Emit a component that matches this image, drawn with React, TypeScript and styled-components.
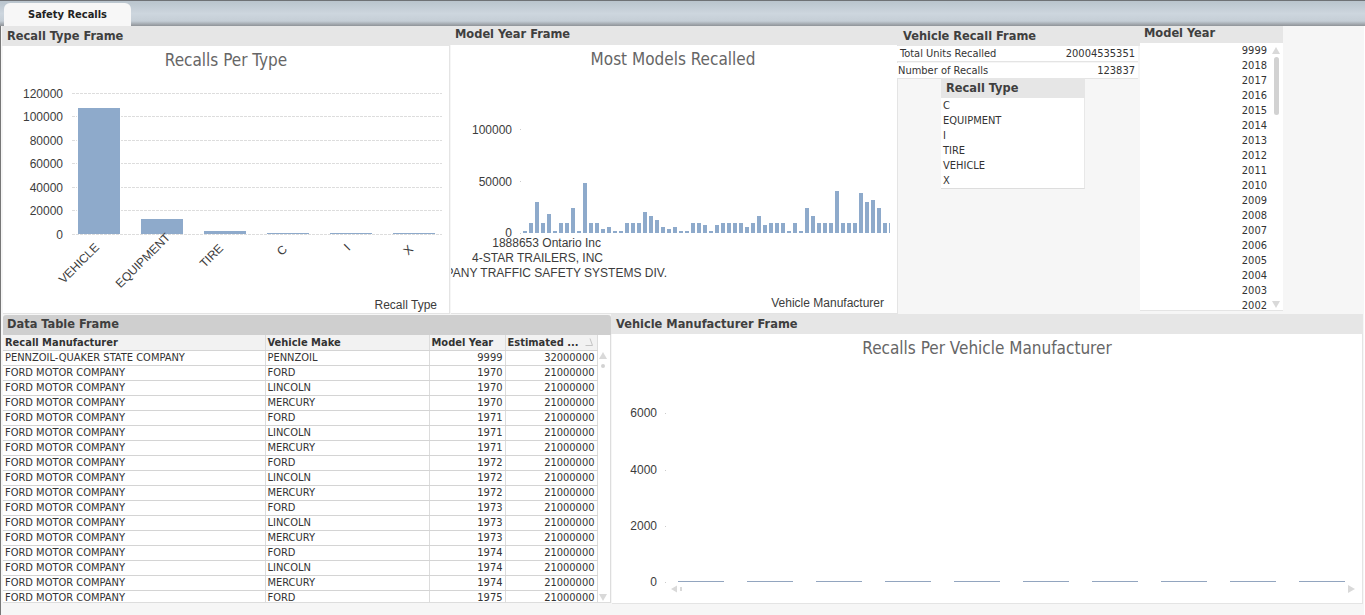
import React from 'react';
import styled, { createGlobalStyle } from 'styled-components';

const UI_FONT = '"DejaVu Sans Condensed", "DejaVu Sans", sans-serif';
const CHART_FONT = '"Liberation Sans", Arial, sans-serif';
const BAR = '#8eaacb';

const GlobalStyle = createGlobalStyle`
  html, body {
    margin: 0;
    padding: 0;
    background: #fff;
  }
`;

const Page = styled.div`
  width: 1365px;
  height: 615px;
  overflow: hidden;
  display: flex;
  flex-direction: column;
  font-family: ${UI_FONT};
  color: #333;
`;

const TabBar = styled.div`
  flex: none;
  box-sizing: border-box;
  height: 26px;
  padding: 2px 0 0 4px;
  display: flex;
  align-items: flex-end;
  background: linear-gradient(#b9c4cd, #cdd6de 50%, #c5ced6 80%, #8f9398);
  border-top: 1px solid #6f7276;
`;

const Tab = styled.div`
  width: 127px;
  height: 23px;
  box-sizing: border-box;
  padding-top: 5px;
  text-align: center;
  font-size: 11px;
  font-weight: 700;
  color: #222;
  background: #f7f7f7;
  border-radius: 6px 6px 0 0;
`;

const Sheet = styled.div`
  flex: 1;
  width: 1364px;
  box-sizing: border-box;
  display: flex;
  flex-direction: column;
  background: #f6f6f6;
  border-left: 1px solid #777;
`;

const TopRow = styled.div`
  display: flex;
  height: 288px;
  padding-left: 1px;
`;

const BottomRow = styled.div`
  display: flex;
  height: 290px;
  padding-left: 2px;
`;

const Panel = styled.section<{ $width: number; $top?: number }>`
  flex: none;
  box-sizing: border-box;
  width: ${(p) => p.$width}px;
  padding-top: ${(p) => p.$top ?? 0}px;
  display: flex;
  flex-direction: column;
  position: relative;
`;

const Caption = styled.div<{ $height?: number; $lineHeight?: number; $pad?: number; $dark?: boolean }>`
  flex: none;
  height: ${(p) => p.$height ?? 20}px;
  line-height: ${(p) => p.$lineHeight ?? p.$height ?? 20}px;
  padding-left: ${(p) => p.$pad ?? 5}px;
  background: ${(p) => (p.$dark ? '#cfcfcf' : '#e6e6e6')};
  border-radius: ${(p) => (p.$dark ? '3px 3px 0 0' : '0')};
  font-size: 12.7px;
  font-weight: 700;
  color: #3f3f3f;
  white-space: nowrap;
  overflow: hidden;
`;

const ChartBody = styled.div`
  flex: 1;
  background: #fff;
  border-bottom: 1px solid #e4e4e4;
  border-right: 1px solid #e4e4e4;
  margin-left: 1px;
  overflow: hidden;
  svg {
    display: block;
  }
`;

const ChartTitle = styled.text`
  font-family: ${UI_FONT};
  font-size: 17px;
  fill: #666;
  text-anchor: middle;
`;

const AxisText = styled.text`
  font-family: ${CHART_FONT};
  font-size: 12px;
  fill: #3c3c3c;
  text-anchor: end;
`;

const Stat = styled.div<{ $indent: number; $gap: number }>`
  display: flex;
  justify-content: space-between;
  box-sizing: border-box;
  width: 241px;
  height: 15px;
  line-height: 15px;
  margin: 0 0 ${(p) => p.$gap}px -1px;
  padding: 0 3px 0 ${(p) => p.$indent}px;
  background: #fff;
  box-shadow: 0 1px 0 #e4e4e4;
  font-size: 11px;
`;

const TypeBox = styled.div`
  width: 144px;
  margin-left: 43px;
`;

const TypeList = styled.div`
  background: #fff;
  border-bottom: 1px solid #ddd;
  border-right: 1px solid #e8e8e8;
`;

const ListRow = styled.div`
  height: 15px;
  line-height: 15px;
  padding-left: 2px;
  font-size: 11px;
`;

const YearList = styled.div`
  height: 267px;
  overflow: hidden;
  background: #fff;
  border-bottom: 1px solid #e4e4e4;
  position: relative;
`;

const YearRow = styled.div`
  height: 15px;
  line-height: 15px;
  padding-right: 16px;
  text-align: right;
  font-size: 11px;
`;

const ScrollArrow = styled.span<{ $dir: 'up' | 'down'; $x: number; $y: number }>`
  position: absolute;
  left: ${(p) => p.$x}px;
  top: ${(p) => p.$y}px;
  width: 0;
  height: 0;
  border-style: solid;
  border-color: transparent;
  ${(p) =>
    p.$dir === 'up'
      ? 'border-width: 0 4px 7px; border-bottom-color: #d9d9d9;'
      : 'border-width: 7px 4px 0; border-top-color: #d9d9d9;'}
`;

const ScrollThumb = styled.span<{ $x: number; $y: number; $w: number; $h: number }>`
  position: absolute;
  left: ${(p) => p.$x}px;
  top: ${(p) => p.$y}px;
  width: ${(p) => p.$w}px;
  height: ${(p) => p.$h}px;
  border-radius: 3px;
  background: #d2d2d2;
`;

const TableWrap = styled.div`
  flex: 1;
  position: relative;
  overflow: hidden;
  background: #fff;
  border-right: 1px solid #ddd;
  border-bottom: 1px solid #ddd;
  margin-bottom: 1px;
`;

const Table = styled.table`
  width: 594px;
  table-layout: fixed;
  border-collapse: collapse;
  font-size: 11px;
`;

const HeadCell = styled.th<{ $width: number }>`
  width: ${(p) => p.$width}px;
  height: 15px;
  padding: 0 2px;
  box-sizing: border-box;
  background: #f2f2f2;
  text-align: left;
  font-weight: 700;
  white-space: nowrap;
  overflow: hidden;
  border-right: 1px solid #dcdcdc;
  border-bottom: 1px solid #d4d4d4;
  position: relative;
`;

const Cell = styled.td<{ $num?: boolean }>`
  height: 15px;
  padding: 0 2px;
  box-sizing: border-box;
  text-align: ${(p) => (p.$num ? 'right' : 'left')};
  white-space: nowrap;
  overflow: hidden;
  border-right: 1px solid #dcdcdc;
  border-bottom: 1px solid #d4d4d4;
`;

const SortMark = styled.svg`
  position: absolute;
  right: 3px;
  top: 2px;
`;

const typeBars = [
  { label: 'VEHICLE', top: 108, end: [100, 248] },
  { label: 'EQUIPMENT', top: 219, end: [171, 238] },
  { label: 'TIRE', top: 231, end: [224, 249] },
  { label: 'C', top: 233, end: [288, 250] },
  { label: 'I', top: 233, end: [351, 249] },
  { label: 'X', top: 233, end: [414, 250] },
];

const typeTicks = [
  { label: '120000', y: 93.5 },
  { label: '100000', y: 116.5 },
  { label: '80000', y: 140.5 },
  { label: '60000', y: 163.5 },
  { label: '40000', y: 187.5 },
  { label: '20000', y: 210.5 },
  { label: '0', y: 234.5 },
];

const modelHeights = [
  2, 10, 31, 10, 19, 2, 10, 10, 25, 2, 50, 10, 10, 4, 6, 2, 2, 10, 10, 10, 21, 17, 13, 6, 4, 6, 2, 2, 10, 10,
  8, 2, 8, 10, 10, 10, 10, 6, 10, 17, 8, 10, 10, 10, 2, 10, 2, 25, 17, 10, 10, 10, 42, 10, 10, 10, 40, 31, 33, 25, 10, 10,
];

const makerTicks = [
  { label: '6000', y: 413 },
  { label: '4000', y: 470 },
  { label: '2000', y: 526 },
  { label: '0', y: 582 },
];

const makerBars = [678, 747, 816, 885, 954, 1023, 1092, 1161, 1230, 1299];

const recallTypes = ['C', 'EQUIPMENT', 'I', 'TIRE', 'VEHICLE', 'X'];

const years = [
  '9999', '2018', '2017', '2016', '2015', '2014', '2013', '2012', '2011',
  '2010', '2009', '2008', '2007', '2006', '2005', '2004', '2003', '2002',
];

const fordMakes = ['FORD', 'LINCOLN', 'MERCURY'];
const tableRows = [
  { maker: 'PENNZOIL-QUAKER STATE COMPANY', make: 'PENNZOIL', year: 9999, units: 32000000 },
  ...Array.from({ length: 16 }, (_, i) => ({
    maker: 'FORD MOTOR COMPANY',
    make: fordMakes[i % 3],
    year: 1970 + Math.floor(i / 3),
    units: 21000000,
  })),
];

function RecallTypeChart() {
  return (
    <svg width={446} height={267}>
      <g transform="translate(-3 -46)">
        <ChartTitle x={226} y={66}>Recalls Per Type</ChartTitle>
        {typeTicks.map((t) => (
          <g key={t.label}>
            <line x1={72} x2={442} y1={t.y} y2={t.y} stroke="#ddd" strokeDasharray="3 1" />
            <AxisText x={63} y={t.y + 4}>{t.label}</AxisText>
          </g>
        ))}
        {typeBars.map((b, i) => (
          <g key={b.label}>
            <rect x={77 + i * 63} y={b.top - 1} width={44} height={235 - b.top} fill="#fff" />
            <rect x={78 + i * 63} y={b.top} width={42} height={234 - b.top} fill={BAR} />
            <AxisText
              x={b.end[0]}
              y={b.end[1]}
              transform={`rotate(-45 ${b.end[0]} ${b.end[1]})`}
            >
              {b.label}
            </AxisText>
          </g>
        ))}
        <AxisText x={437} y={309}>Recall Type</AxisText>
      </g>
    </svg>
  );
}

function ModelChart() {
  return (
    <svg width={446} height={267}>
      <g transform="translate(-451 -45)">
        <ChartTitle x={673} y={65}>Most Models Recalled</ChartTitle>
        <AxisText x={512} y={134}>100000</AxisText>
        <AxisText x={512} y={186}>50000</AxisText>
        <AxisText x={512} y={237}>0</AxisText>
        <rect x={520} y={129} width={1} height={1} fill="#ccc" />
        <rect x={520} y={181} width={1} height={1} fill="#ccc" />
        <rect x={520} y={233} width={1} height={1} fill="#ccc" />
        {modelHeights.map((h, i) => (
          <rect
            key={i}
            x={523 + i * 6}
            y={233 - h}
            width={i === modelHeights.length - 1 ? 1 : 4}
            height={h}
            fill={BAR}
          />
        ))}
        <AxisText x={601} y={247}>1888653 Ontario Inc</AxisText>
        <AxisText x={603} y={262}>4-STAR TRAILERS, INC</AxisText>
        <AxisText x={667} y={277}>3M COMPANY TRAFFIC SAFETY SYSTEMS DIV.</AxisText>
        <AxisText x={884} y={307}>Vehicle Manufacturer</AxisText>
      </g>
    </svg>
  );
}

function MakerChart() {
  return (
    <svg width={751} height={270}>
      <g transform="translate(-612 -334)">
        <ChartTitle x={987} y={354}>Recalls Per Vehicle Manufacturer</ChartTitle>
        {makerTicks.map((t) => (
          <g key={t.label}>
            <AxisText x={657} y={t.y + 4}>{t.label}</AxisText>
            <rect x={665} y={t.y} width={1} height={1} fill="#ccc" />
          </g>
        ))}
        {makerBars.map((x) => (
          <rect key={x} x={x} y={581} width={46} height={1} fill="#92a5bf" />
        ))}
        <path d="M671 589l6-3.500v7zM680 587h2v4h-2z" fill="#d9d9d9" />
        <path d="M1348 585l7 4-7 4z" fill="#d9d9d9" />
      </g>
    </svg>
  );
}

export default function App() {
  return (
    <Page>
      <GlobalStyle />
      <TabBar>
        <Tab>Safety Recalls</Tab>
      </TabBar>
      <Sheet>
        <TopRow>
          <Panel $width={448}>
            <Caption>Recall Type Frame</Caption>
            <ChartBody>
              <RecallTypeChart />
            </ChartBody>
          </Panel>
          <Panel $width={448}>
            <Caption $height={19} $lineHeight={16}>Model Year Frame</Caption>
            <ChartBody>
              <ModelChart />
            </ChartBody>
          </Panel>
          <Panel $width={242}>
            <Caption>Vehicle Recall Frame</Caption>
            <Stat $indent={3} $gap={2}>
              <span>Total Units Recalled</span>
              <span>20004535351</span>
            </Stat>
            <Stat $indent={1} $gap={0}>
              <span>Number of Recalls</span>
              <span>123837</span>
            </Stat>
            <TypeBox>
              <Caption>Recall Type</Caption>
              <TypeList>
                {recallTypes.map((t) => (
                  <ListRow key={t}>{t}</ListRow>
                ))}
              </TypeList>
            </TypeBox>
          </Panel>
          <Panel $width={143}>
            <Caption $height={17} $lineHeight={13} $pad={4}>Model Year</Caption>
            <YearList>
              {years.map((y) => (
                <YearRow key={y}>{y}</YearRow>
              ))}
              <ScrollArrow $dir="up" $x={132} $y={4} />
              <ScrollThumb $x={134} $y={14} $w={5} $h={58} />
              <ScrollArrow $dir="down" $x={132} $y={258} />
            </YearList>
          </Panel>
        </TopRow>
        <BottomRow>
          <Panel $width={608} $top={1}>
            <Caption $dark $pad={4} $lineHeight={18}>Data Table Frame</Caption>
            <TableWrap>
              <Table>
                <thead>
                  <tr>
                    <HeadCell $width={262}>Recall Manufacturer</HeadCell>
                    <HeadCell $width={164}>Vehicle Make</HeadCell>
                    <HeadCell $width={76}>Model Year</HeadCell>
                    <HeadCell $width={92}>
                      Estimated ...
                      <SortMark width={10} height={10} viewBox="0 0 10 10">
                        <path d="M1.500 8.500h7L6 1.500" fill="none" stroke="#c4c4c4" />
                      </SortMark>
                    </HeadCell>
                  </tr>
                </thead>
                <tbody>
                  {tableRows.map((r, i) => (
                    <tr key={i}>
                      <Cell>{r.maker}</Cell>
                      <Cell>{r.make}</Cell>
                      <Cell $num>{r.year}</Cell>
                      <Cell $num>{r.units}</Cell>
                    </tr>
                  ))}
                </tbody>
              </Table>
              <ScrollArrow $dir="up" $x={596} $y={17} />
              <ScrollThumb $x={598} $y={29} $w={4} $h={4} />
              <ScrollArrow $dir="down" $x={596} $y={259} />
            </TableWrap>
          </Panel>
          <Panel $width={752}>
            <Caption $pad={5}>Vehicle Manufacturer Frame</Caption>
            <ChartBody>
              <MakerChart />
            </ChartBody>
          </Panel>
        </BottomRow>
      </Sheet>
    </Page>
  );
}
